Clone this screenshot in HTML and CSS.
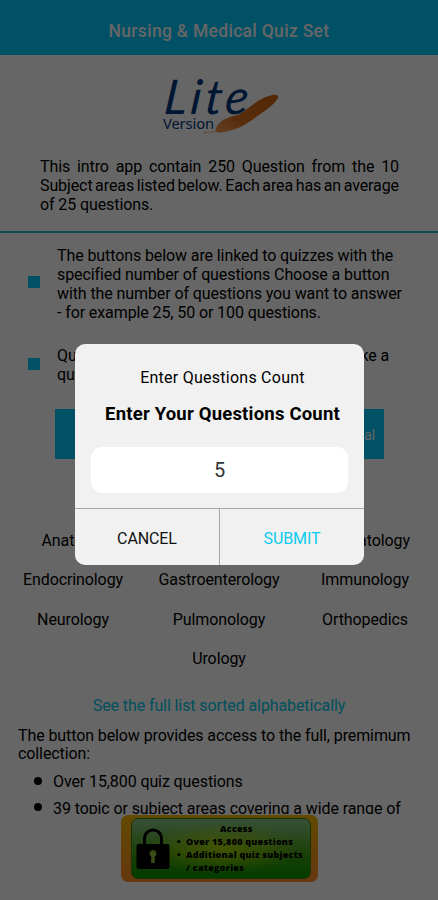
FILE: index.html
```html
<!DOCTYPE html>
<html lang="en">
<head>
  <meta charset="UTF-8" />
  <meta name="viewport" content="width=device-width, initial-scale=1.0"/>
  <title>Nursing &amp; Medical Quiz Set</title>
  <link rel="stylesheet" href="styles.css">
</head>
<body>
  <div class="app">
    <header class="topbar"><h1>Nursing &amp; Medical Quiz Set</h1></header>

    <main class="content">
      <svg class="logo" width="118" height="60" viewBox="0 0 118 60" role="img" aria-label="Lite Version">
        <defs>
          <linearGradient id="brush" x1="0" y1="1" x2="1" y2="0">
            <stop offset="0" stop-color="#f9a35c"/>
            <stop offset="0.35" stop-color="#d9711f"/>
            <stop offset="1" stop-color="#d4650f"/>
          </linearGradient>
        </defs>
        <path d="M55 52 C58 45 66 41 77 39 C88 33 96 23 108 20 C113 18 118 18 117 22 C114 28 104 35 95 41 C85 49 73 55 62 56 C56 57 53 56 55 52Z" fill="url(#brush)"/>
        <path d="M42 57 Q52 55 62 56" fill="none" stroke="#d9711f" stroke-width="0.5"/>
        <text class="logo-lite" transform="translate(2 38) skewX(-6)" textLength="84" lengthAdjust="spacing">Lite</text>
        <text class="logo-version" x="2" y="53" textLength="51" lengthAdjust="spacingAndGlyphs">Version</text>
      </svg>

      <p class="intro">
        <span>This intro app contain 250 Question from the 10</span>
        <span class="tight">Subject areas listed below. Each area has an average</span>
        <span class="last">of 25 questions.</span>
      </p>

      <ul class="notes">
        <li>The buttons below are linked to quizzes with the<br>specified number of questions Choose a button<br>with the number of questions you want to answer<br>- for example 25, 50 or 100 questions.</li>
        <li>Questions are randomized each time you take a<br>quiz.</li>
      </ul>

      <div class="quiz-button"><span>al</span></div>

      <div class="subjects">
        <span>Anatomy</span><span></span><span>Dermatology</span>
        <span>Endocrinology</span><span>Gastroenterology</span><span>Immunology</span>
        <span>Neurology</span><span>Pulmonology</span><span>Orthopedics</span>
        <span></span><span>Urology</span><span></span>
      </div>

      <a class="full-list">See the full list sorted alphabetically</a>

      <p class="premium">The button below provides access to the full, premimum collection:</p>
      <ul class="features">
        <li>Over 15,800 quiz questions</li>
        <li>39 topic or subject areas covering a wide range of</li>
      </ul>
    </main>

    <div class="access">
      <div class="access-inner">
        <svg class="lock" width="34" height="42" viewBox="0 0 34 42">
          <path d="M8.500 18 V11 C8.500 -1 25.500 -1 25.500 11 V18" fill="none" stroke="#000" stroke-width="3"/>
          <rect x="0.500" y="16" width="33" height="25" rx="2" fill="#000"/>
          <path d="M17 22 a3.500 3.500 0 0 1 1.800 6.500 V35 h-3.600 V28.500 A3.500 3.500 0 0 1 17 22Z" fill="#8fbf38"/>
        </svg>
        <div class="access-text">
          <strong>Access</strong>
          <ul>
            <li>Over 15,800 questions</li>
            <li>Additional quiz subjects<br>/ categories</li>
          </ul>
        </div>
      </div>
    </div>
  </div>

  <div class="overlay">
    <div class="dialog">
      <div class="dialog-title">Enter Questions Count</div>
      <div class="dialog-message">Enter Your Questions Count</div>
      <input class="count" type="text" value="5" />
      <div class="dialog-actions">
        <button>CANCEL</button>
        <button class="submit">SUBMIT</button>
      </div>
    </div>
  </div>
</body>
</html>
```
FILE: styles.css
```css
* {
  box-sizing: border-box;
}
body {
  margin: 0;
  font-family: Roboto, sans-serif;
  font-size: 16px;
  line-height: 18.75px;
  letter-spacing: -0.1px;
  color: #000;
  background: #fff;
}
h1, p, ul {
  margin: 0;
  padding: 0;
}
ul {
  list-style: none;
}
.app {
  width: 438px;
  height: 900px;
  display: flex;
  flex-direction: column;
  overflow: hidden;
}
.topbar {
  flex: none;
  height: 55px;
  padding-top: 7px;
  display: flex;
  align-items: center;
  justify-content: center;
  background: #00c8ff;
  color: #fff;
}
.topbar h1 {
  font-size: 17.500px;
  font-weight: 500;
  letter-spacing: 0.3px;
}
.content {
  flex: none;
  height: 759px;
  display: flex;
  flex-direction: column;
  overflow: hidden;
}
.logo {
  flex: none;
  margin: 21px 0 0 161px;
  overflow: visible;
}
.logo-lite {
  font-family: Lato, sans-serif;
  font-style: italic;
  font-size: 48px;
  fill: #00387e;
}
.logo-version {
  font-family: "Noto Sans", sans-serif;
  font-size: 15px;
  fill: #00387e;
}
.intro {
  padding: 22px 39px 17px 40px;
  border-bottom: 2px solid #37b9cf;
}
.intro span {
  display: block;
  text-align-last: justify;
  white-space: nowrap;
}
.intro .tight {
  word-spacing: -2.500px;
}
.intro .last {
  text-align-last: left;
}
.notes {
  padding: 14px 0 0 28px;
}
.notes li {
  display: grid;
  grid-template-columns: 29px auto;
  align-items: center;
  margin-bottom: 25px;
  white-space: nowrap;
}
.notes li::before {
  content: "";
  width: 12px;
  height: 12px;
  margin-bottom: 5px;
  background: #00c8ff;
}
.quiz-button {
  flex: none;
  width: 329px;
  height: 50px;
  margin: -1px 0 0 55px;
  padding: 3px 9px 0 0;
  display: flex;
  align-items: center;
  justify-content: flex-end;
  background: #00c8ff;
  color: #fff;
  font-size: 14px;
}
.subjects {
  display: grid;
  grid-template-columns: repeat(3, 146px);
  grid-auto-rows: 39.3px;
  align-items: center;
  text-align: center;
  margin-top: 63px;
}
.full-list {
  margin-top: 18px;
  text-align: center;
  color: #00c8e8;
}
.premium {
  padding: 11px 18px 0;
}
.features {
  padding: 1px 0 0 34px;
}
.features li {
  display: flex;
  align-items: center;
  gap: 11px;
  margin-top: 8px;
  white-space: nowrap;
}
.features li::before {
  content: "";
  width: 8px;
  height: 8px;
  margin-bottom: 4px;
  border-radius: 50%;
  background: #000;
}
.access {
  flex: none;
  width: 197px;
  height: 67px;
  margin: 1px 0 0 121px;
  padding: 3px 7px 3px 10px;
  border-radius: 7px;
  background: linear-gradient(#f5b800, #ff8a2a);
}
.access-inner {
  height: 61px;
  padding: 3px 4px;
  display: flex;
  gap: 5px;
  border: 1px solid #3f7d10;
  border-radius: 7px;
  background: radial-gradient(ellipse at 50% 50%, rgba(190, 220, 0, 0.8), rgba(190, 220, 0, 0) 60%), linear-gradient(#8dc88a, #42a010 60%, #089800);
}
.lock {
  flex: none;
  margin-top: 6px;
}
.access-text {
  flex: 1;
  font-family: "Open Sans", sans-serif;
  font-size: 9px;
  font-weight: 800;
  line-height: 13px;
  letter-spacing: 0.25px;
  white-space: nowrap;
}
.access-text strong {
  display: block;
  padding-left: 45px;
  font-weight: 800;
}
.access-text li {
  padding-left: 11px;
  text-indent: -9px;
}
.access-text li::before {
  content: "•";
  display: inline-block;
  width: 9px;
  text-indent: 0;
}
.overlay {
  position: absolute;
  inset: 0;
  padding: 344px 0 0 75px;
  background: rgba(0, 0, 0, 0.6);
}
.dialog {
  width: 289px;
  height: 221px;
  display: flex;
  flex-direction: column;
  border-radius: 10px;
  background: #f1f1f1;
  overflow: hidden;
  text-align: center;
}
.dialog-title {
  padding: 25px 0 0 6px;
  letter-spacing: 0.25px;
}
.dialog-message {
  padding: 17px 0 0 6px;
  font-size: 18.500px;
  font-weight: 700;
  letter-spacing: 0.2px;
}
.count {
  width: 257px;
  height: 46px;
  margin: 23px 0 0 16px;
  border: 0;
  border-radius: 11px;
  background: #fff;
  color: #333;
  font-family: inherit;
  font-size: 20px;
  text-align: center;
}
.dialog-actions {
  display: flex;
  height: 57px;
  margin-top: auto;
  border-top: 1px solid #a8a8a8;
}
.dialog-actions button {
  flex: 1;
  padding: 2px 0 0;
  border: 0;
  background: none;
  font-family: inherit;
  font-size: 16px;
  letter-spacing: -0.1px;
  color: #111;
}
.dialog-actions .submit {
  border-left: 1px solid #a8a8a8;
  color: #08cdee;
}
```
